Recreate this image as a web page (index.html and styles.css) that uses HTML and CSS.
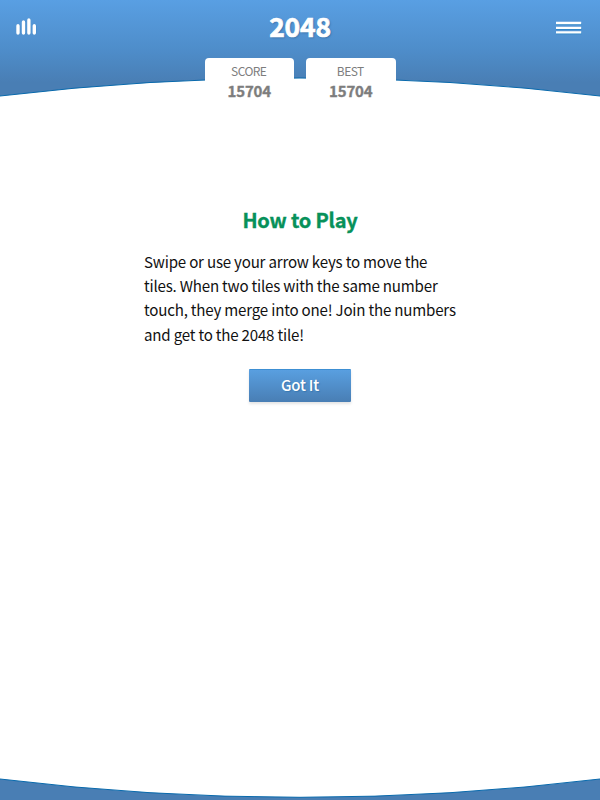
FILE: index.html
```
<!DOCTYPE html>
<html lang="en">
<head>
<meta charset="utf-8">
<title>2048</title>
<link rel="stylesheet" href="styles.css">
</head>
<body>
<header class="header">
  <svg class="curve curve-top" viewBox="0 0 600 100" preserveAspectRatio="none" aria-hidden="true">
    <defs>
      <linearGradient id="sky" x1="0" y1="0" x2="0" y2="1">
        <stop offset="0" stop-color="#599fe3"/>
        <stop offset="0.52" stop-color="#4e8dca"/>
        <stop offset="0.86" stop-color="#497eb4"/>
        <stop offset="1" stop-color="#497eb4"/>
      </linearGradient>
    </defs>
    <path d="M0 0H600V96Q300 60 0 96Z" fill="url(#sky)"/>
    <path d="M0 96Q300 60 600 96" fill="none" stroke="#0869ac" stroke-width="1"/>
  </svg>
  <div class="bar">
    <svg class="icon" width="22" height="20" viewBox="0 0 22 20" aria-hidden="true">
      <g fill="none" stroke-width="3.6" stroke-linecap="round">
        <path d="M3.4 8.8V16M8.8 5V16M14.2 3V16M19.6 8.8V16" stroke="#2f7fbd" stroke-opacity=".6"/>
        <path d="M3 8.8V16M8.5 5V16M13.9 3V16M19.3 8.8V16" stroke="#fff" stroke-width="3.4"/>
      </g>
    </svg>
    <h1 class="title">2048</h1>
    <svg class="icon icon-menu" width="26" height="16" viewBox="0 0 26 16" aria-hidden="true">
      <path d="M0 5H25.4M0 9.8H25.4M0 14.3H25.4" stroke="#2782c3" stroke-width="2"/>
      <path d="M0 4H25.2M0 8.8H25.2M0 13.4H25.2" stroke="#fff" stroke-width="2.3"/>
    </svg>
  </div>
  <div class="scores">
    <div class="score"><span class="label">SCORE</span><span class="value">15704</span></div>
    <div class="score"><span class="label">BEST</span><span class="value">15704</span></div>
  </div>
</header>
<main class="panel">
  <h2 class="heading">How to Play</h2>
  <p class="copy">Swipe or use your arrow keys to move the<br>tiles. When two tiles with the same number<br>touch, they merge into one! Join the numbers<br>and get to the 2048 tile!</p>
  <button class="button" type="button">Got It</button>
</main>
<footer class="footer">
  <svg class="curve" viewBox="0 0 600 24" preserveAspectRatio="none" aria-hidden="true">
    <path d="M0 3Q300 39.6 600 3V24H0Z" fill="#497eb4"/>
    <path d="M0 3Q300 39.6 600 3" fill="none" stroke="#0869ac" stroke-width="1"/>
  </svg>
</footer>
</body>
</html>
```
FILE: styles.css
```
* { box-sizing: border-box; }

body {
  margin: 0;
  height: 800px;
  display: flex;
  flex-direction: column;
  background: #fff;
  color: #111;
  font-family: "Noto Sans CJK JP", "Noto Sans", sans-serif;
  overflow: hidden;
}

.header {
  position: relative;
  height: 104px;
}

.curve {
  display: block;
  width: 100%;
  height: 24px;
}

.curve-top {
  position: absolute;
  inset: 0;
  height: 100px;
}

.bar {
  position: relative;
  display: grid;
  grid-template-columns: 1fr auto 1fr;
  align-items: center;
  height: 54px;
  padding: 0 18px 0 15px;
}

.icon { display: block; }

.icon-menu { justify-self: end; }

.title {
  margin: 0 0 2px 3px;
  font-size: 26.5px;
  line-height: 52px;
  font-weight: 700;
  letter-spacing: -0.2px;
  color: #fff;
  -webkit-text-stroke: 0.7px #fff;
  text-shadow: 1px 1px 2px #356da3;
}

.scores {
  position: relative;
  display: flex;
  justify-content: center;
  gap: 12px;
  padding-top: 4px;
}

.score {
  width: 89.5px;
  height: 46px;
  display: flex;
  flex-direction: column;
  align-items: center;
  background: #fff;
  border-radius: 4px 4px 0 0;
  color: #7d7d7d;
}

.label {
  font-size: 12px;
  letter-spacing: -0.55px;
  line-height: 16px;
  padding: 5px 1px 0 0;
}

.value {
  font-size: 15px;
  font-weight: 700;
  letter-spacing: -0.15px;
  line-height: 24px;
  -webkit-text-stroke: 0.35px #7d7d7d;
}

.panel {
  flex: 1;
  display: flex;
  flex-direction: column;
  align-items: center;
  padding-top: 100px;
}

.heading {
  margin: 0;
  font-size: 20px;
  line-height: 32px;
  font-weight: 700;
  letter-spacing: -0.2px;
  color: #07915a;
  -webkit-text-stroke: 0.35px #07915a;
}

.copy {
  width: 312px;
  margin: 13px 0 23px;
  font-size: 15.1px;
  letter-spacing: -0.2px;
  line-height: 24.2px;
  white-space: nowrap;
}

.button {
  width: 102px;
  height: 33px;
  padding: 0 0 2px;
  border: 0;
  border-top: 1px solid #3d8fd3;
  border-radius: 1px;
  background: linear-gradient(#599fe0, #497eb4);
  box-shadow: 0 2px 3px #0000001c;
  color: #fff;
  font: 500 15px/30px "Noto Sans CJK JP", "Noto Sans", sans-serif;
  letter-spacing: -0.2px;
  text-shadow: 1px 1px 1px #3978b0;
}

.footer { height: 24px; }
```
